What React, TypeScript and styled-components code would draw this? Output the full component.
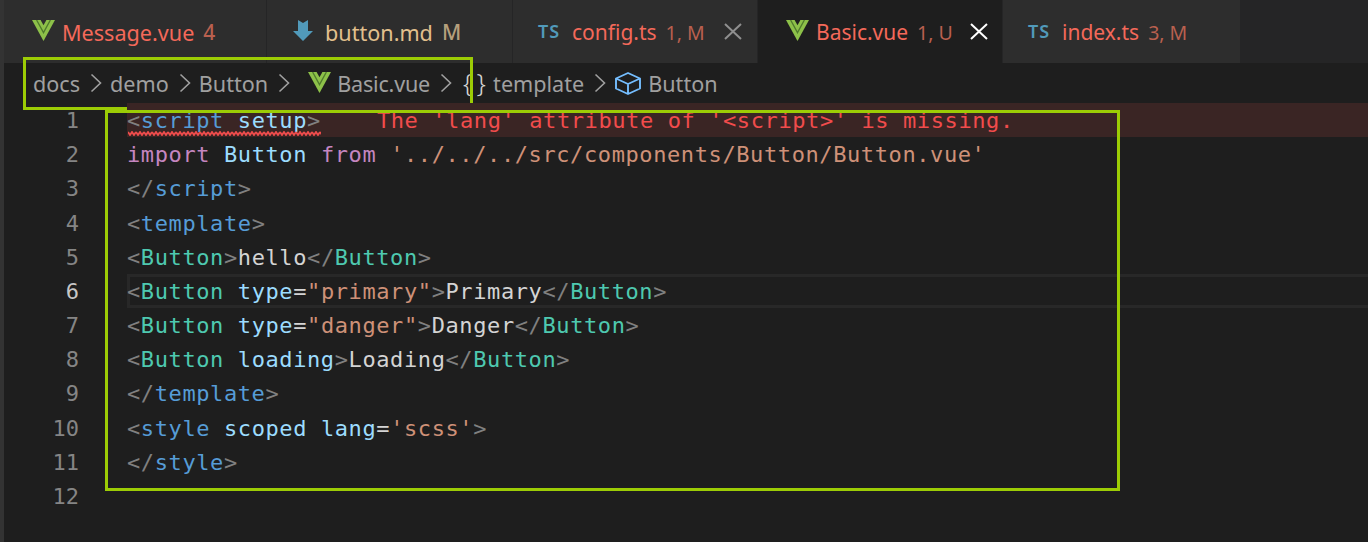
import { createGlobalStyle, styled } from "styled-components";

const GlobalStyle = createGlobalStyle`
    html, body {
        margin: 0;
        padding: 0;
        background: #1e1e1e;
        width: 1368px;
        height: 542px;
        overflow: hidden;
    }
`;

const ACCENT = "#9ccc05";
const SANS = `"Noto Sans", "Open Sans", sans-serif`;
const MONO = `"DejaVu Sans Mono", "Liberation Mono", monospace`;

type Tok = "punct" | "tag" | "comp" | "attr" | "str" | "text" | "kw" | "id";

const colors: Record<Tok, string> = {
    punct: "#808080",
    tag: "#569cd6",
    comp: "#4ec9b0",
    attr: "#9cdcfe",
    str: "#ce9178",
    text: "#d4d4d4",
    kw: "#c586c0",
    id: "#9cdcfe",
};

const lines: [Tok, string][][] = [
    [
        ["punct", "<"],
        ["tag", "script"],
        ["text", " "],
        ["attr", "setup"],
        ["punct", ">"],
    ],
    [
        ["kw", "import"],
        ["text", " "],
        ["id", "Button"],
        ["text", " "],
        ["kw", "from"],
        ["text", " "],
        ["str", "'../../../src/components/Button/Button.vue'"],
    ],
    [
        ["punct", "</"],
        ["tag", "script"],
        ["punct", ">"],
    ],
    [
        ["punct", "<"],
        ["tag", "template"],
        ["punct", ">"],
    ],
    [
        ["punct", "<"],
        ["comp", "Button"],
        ["punct", ">"],
        ["text", "hello"],
        ["punct", "</"],
        ["comp", "Button"],
        ["punct", ">"],
    ],
    [
        ["punct", "<"],
        ["comp", "Button"],
        ["text", " "],
        ["attr", "type"],
        ["text", "="],
        ["str", '"primary"'],
        ["punct", ">"],
        ["text", "Primary"],
        ["punct", "</"],
        ["comp", "Button"],
        ["punct", ">"],
    ],
    [
        ["punct", "<"],
        ["comp", "Button"],
        ["text", " "],
        ["attr", "type"],
        ["text", "="],
        ["str", '"danger"'],
        ["punct", ">"],
        ["text", "Danger"],
        ["punct", "</"],
        ["comp", "Button"],
        ["punct", ">"],
    ],
    [
        ["punct", "<"],
        ["comp", "Button"],
        ["text", " "],
        ["attr", "loading"],
        ["punct", ">"],
        ["text", "Loading"],
        ["punct", "</"],
        ["comp", "Button"],
        ["punct", ">"],
    ],
    [
        ["punct", "</"],
        ["tag", "template"],
        ["punct", ">"],
    ],
    [
        ["punct", "<"],
        ["tag", "style"],
        ["text", " "],
        ["attr", "scoped"],
        ["text", " "],
        ["attr", "lang"],
        ["text", "="],
        ["str", "'scss'"],
        ["punct", ">"],
    ],
    [
        ["punct", "</"],
        ["tag", "style"],
        ["punct", ">"],
    ],
    [],
];

const tabs = [
    { icon: "vue", name: "Message.vue", badge: "4", width: 267, size: 21.6, nameColor: "#f4695a", badgeColor: "#b9604f", pad: 32 },
    { icon: "md", name: "button.md", badge: "M", width: 246, size: 21.6, nameColor: "#e2c08d", badgeColor: "#b59f7c", pad: 26 },
    { icon: "ts", name: "config.ts", badge: "1, M", width: 245, size: 21, nameColor: "#f4695a", badgeColor: "#b9604f", pad: 25, close: "dim", closeGap: 12 },
    { icon: "vue", name: "Basic.vue", badge: "1, U", width: 245, size: 21, nameColor: "#f4695a", badgeColor: "#b9604f", pad: 28, close: "bright", closeGap: 10, active: true },
    { icon: "ts", name: "index.ts", badge: "3, M", width: 238, size: 21, nameColor: "#f4695a", badgeColor: "#b9604f", pad: 25 },
];

const VueIcon = ({ bg }: { bg: string }) => (
    <IconSvg width="23" height="21" viewBox="0 0 23 21">
        <path d="M0 0H23L11.5 21z" fill="#8dc149" />
        <path d="M4.6 0L11.5 12.6 18.4 0" fill="none" stroke="#4f7a2c" strokeWidth="1.3" />
        <path d="M8.6 0L11.5 5.2 14.4 0z" fill={bg} />
    </IconSvg>
);

const MdIcon = () => (
    <MdSvg width="20" height="21" viewBox="0 0 20 21">
        <path d="M5 0l5 3 5-3v11h5L10 21 0 11h5z" fill="#519aba" />
    </MdSvg>
);

const CloseIcon = ({ bright, gap }: { bright: boolean; gap: number }) => (
    <CloseSvg $gap={gap} width="18" height="17" viewBox="0 0 18 17">
        <path d="M1 1l16 15M17 1L1 16" fill="none" stroke={bright ? "#ffffff" : "#8f8f8f"} strokeWidth="2" />
    </CloseSvg>
);

const Chevron = () => (
    <ChevronSvg width="12" height="20" viewBox="0 0 12 20">
        <path d="M1.5 1.5l9 8.5-9 8.5" fill="none" stroke="#a0a0a0" strokeWidth="1.6" />
    </ChevronSvg>
);

const BoxIcon = () => (
    <BoxSvg width="26" height="23" viewBox="0 0 26 23">
        <path
            d="M13 1l12 5.5v10L13 22 1 16.5v-10zM1 6.5L13 12l12-5.5M13 12v10"
            fill="none"
            stroke="#75beff"
            strokeWidth="1.9"
            strokeLinejoin="round"
        />
    </BoxSvg>
);

const App = () => {
    return (
        <Window>
            <GlobalStyle />
            <TabBar>
                {tabs.map((t) => (
                    <Tab key={t.name} $width={t.width} $pad={t.pad} $active={!!t.active} $size={t.size}>
                        {t.icon === "vue" && <VueIcon bg={t.active ? "#1e1e1e" : "#2d2d2d"} />}
                        {t.icon === "md" && <MdIcon />}
                        {t.icon === "ts" && <TsLabel>TS</TsLabel>}
                        <TabName $color={t.nameColor}>{t.name}</TabName>
                        <TabBadge $color={t.badgeColor} $wide={t.size > 21}>
                            {t.badge}
                        </TabBadge>
                        {t.close && <CloseIcon bright={t.close === "bright"} gap={t.closeGap ?? 0} />}
                    </Tab>
                ))}
            </TabBar>
            <Crumbs>
                <Crumb>docs</Crumb>
                <Chevron />
                <Crumb>demo</Crumb>
                <Chevron />
                <Crumb>Button</Crumb>
                <Chevron />
                <CrumbIcon>
                    <VueIcon bg="#1e1e1e" />
                </CrumbIcon>
                <Crumb $tight>Basic.vue</Crumb>
                <Chevron />
                <Braces>{"{}"}</Braces>
                <Crumb>template</Crumb>
                <Chevron />
                <BoxIcon />
                <Crumb>Button</Crumb>
                <CrumbHighlight />
            </Crumbs>
            <Editor>
                <Gutter>
                    {lines.map((_, i) => (
                        <LineNo key={i} $current={i === 5}>
                            {i + 1}
                        </LineNo>
                    ))}
                </Gutter>
                <Code>
                    {lines.map((line, i) => (
                        <CodeLine key={i} $error={i === 0} $current={i === 5}>
                            {line.map(([kind, text], j) => (
                                <Token key={j} $color={colors[kind]}>
                                    {text}
                                </Token>
                            ))}
                            {i === 0 && <Squiggle />}
                            {i === 0 && <ErrorLens>The 'lang' attribute of '&lt;script&gt;' is missing.</ErrorLens>}
                        </CodeLine>
                    ))}
                    <CodeHighlight />
                </Code>
            </Editor>
        </Window>
    );
};

export default App;

const Window = styled.div`
    width: 1368px;
    height: 542px;
    background: #1e1e1e;
    border-left: 4px solid #333333;
    box-sizing: border-box;
    display: flex;
    flex-direction: column;
    overflow: hidden;
`;

const TabBar = styled.div`
    display: flex;
    height: 63px;
    margin-left: -4px;
    background: #252526;
    flex-shrink: 0;
`;

const Tab = styled.div<{ $width: number; $pad: number; $active: boolean; $size: number }>`
    width: ${(p) => p.$width}px;
    box-sizing: border-box;
    padding-left: ${(p) => p.$pad}px;
    background: ${(p) => (p.$active ? "#1e1e1e" : "#2d2d2d")};
    border-right: 1px solid #252526;
    display: flex;
    align-items: center;
    gap: 7px;
    font-family: ${SANS};
    font-size: ${(p) => p.$size}px;
`;

const IconSvg = styled.svg`
    flex-shrink: 0;
    margin-top: -2px;
`;

const MdSvg = styled.svg`
    flex-shrink: 0;
    margin-top: -2px;
    margin-right: 5px;
`;

const CloseSvg = styled.svg<{ $gap: number }>`
    flex-shrink: 0;
    margin-left: ${(p) => p.$gap}px;
`;

const TsLabel = styled.span`
    color: #519aba;
    font-weight: 600;
    font-size: 18px;
    letter-spacing: 1px;
    width: 27px;
    margin-top: -1px;
`;

const TabName = styled.span<{ $color: string }>`
    color: ${(p) => p.$color};
    margin-top: 1px;
`;

const TabBadge = styled.span<{ $color: string; $wide: boolean }>`
    color: ${(p) => p.$color};
    font-size: ${(p) => (p.$wide ? 21 : 19.5)}px;
    font-weight: ${(p) => (p.$wide ? 500 : 400)};
    margin-left: 2px;
    margin-top: 1px;
`;

const Crumbs = styled.div`
    position: relative;
    height: 40px;
    flex-shrink: 0;
    display: flex;
    align-items: center;
    padding-left: 29px;
    font-family: ${SANS};
    font-size: 21.6px;
`;

const Crumb = styled.span<{ $tight?: boolean }>`
    color: #a0a0a0;
    letter-spacing: ${(p) => (p.$tight ? "-0.2px" : "0")};
`;

const ChevronSvg = styled.svg`
    flex-shrink: 0;
    margin: 0 8px 0 10px;
`;

const BoxSvg = styled.svg`
    flex-shrink: 0;
    margin: 0 7px 0 1px;
`;

const CrumbIcon = styled.span`
    display: flex;
    margin: 0 6px 0 10px;
`;

const Braces = styled.span`
    color: #d4d4d4;
    font-size: 26px;
    font-weight: 300;
    letter-spacing: 4px;
    margin: -2px 8px 0 3px;
    line-height: 1;
    width: 22px;
`;

const CrumbHighlight = styled.div`
    position: absolute;
    left: 19px;
    top: -6px;
    width: 450px;
    height: 53px;
    box-sizing: border-box;
    border: 3px solid ${ACCENT};
`;

const Editor = styled.div`
    display: flex;
    flex: 1;
    font-family: ${MONO};
    font-size: 22px;
`;

const Gutter = styled.div`
    width: 123px;
    box-sizing: border-box;
    flex-shrink: 0;
`;

const LineNo = styled.div<{ $current: boolean }>`
    height: 34.18px;
    line-height: 36px;
    width: 75px;
    text-align: right;
    color: ${(p) => (p.$current ? "#c6c6c6" : "#858585")};
`;

const Code = styled.div`
    position: relative;
    flex: 1;
`;

const CodeLine = styled.div<{ $error: boolean; $current: boolean }>`
    position: relative;
    height: 34.18px;
    line-height: 36px;
    box-sizing: border-box;
    white-space: pre;
    letter-spacing: 0.6px;
    background: ${(p) => (p.$error ? "#3a2524" : "transparent")};
    box-shadow: ${(p) => (p.$current ? "inset 3px 3px 0 #282828, inset 0 -3px 0 #282828" : "none")};
`;

const Token = styled.span<{ $color: string }>`
    color: ${(p) => p.$color};
`;

const Squiggle = styled.span`
    position: absolute;
    left: 1px;
    top: 28px;
    width: 193px;
    height: 5px;
    background-image: url("data:image/svg+xml,%3Csvg xmlns='http://www.w3.org/2000/svg' width='8' height='5'%3E%3Cpath d='M0 1l2 3 2-3 2 3 2-3' fill='none' stroke='%23f14c4c' stroke-width='1.8'/%3E%3C/svg%3E");
`;

const ErrorLens = styled.span`
    color: #f14c4c;
    margin-left: 56px;
`;

const CodeHighlight = styled.div`
    position: absolute;
    left: -22px;
    top: 7px;
    width: 1015px;
    height: 381px;
    box-sizing: border-box;
    border: 3px solid ${ACCENT};
`;
